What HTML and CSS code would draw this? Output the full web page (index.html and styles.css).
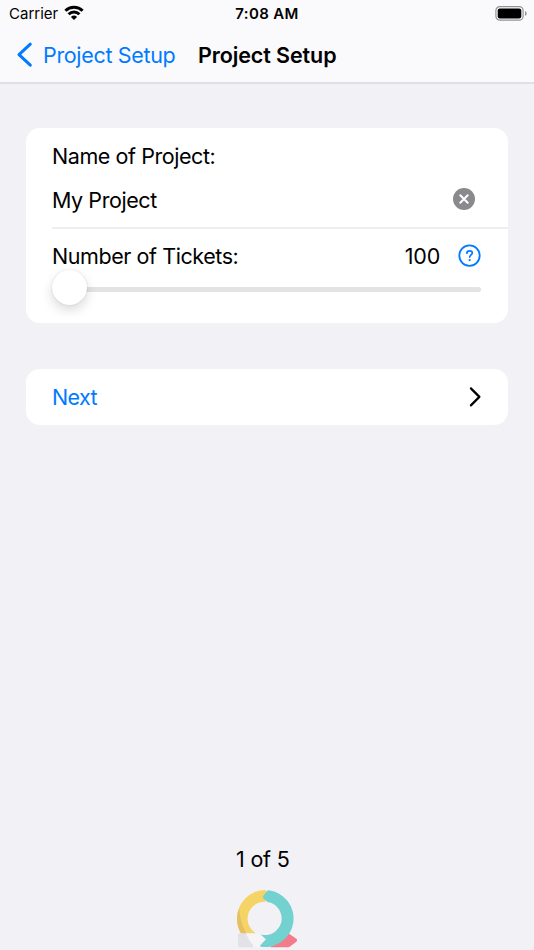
FILE: index.html
```html
<!DOCTYPE html>
<html lang="en">
<head>
<meta charset="utf-8">
<title>Project Setup</title>
<link rel="stylesheet" href="styles.css">
</head>
<body>
<header class="top">
  <div class="status">
    <div class="carrier"><span class="carrier-name">Carrier</span>
      <svg class="wifi" width="20" height="16" viewBox="0 0 20 16"><g fill="none" stroke="#000" stroke-width="3"><path d="M1.400 5.800a12.300 12.300 0 0 1 17.200 0"/><path d="M4.600 9.300a7.700 7.700 0 0 1 10.800 0"/></g><path d="M6.900 11.900a4.500 4.500 0 0 1 6.200 0L10 15z"/></svg>
    </div>
    <div class="time">7:08 AM</div>
    <svg class="battery" width="32" height="16" viewBox="0 0 32 16"><rect x=".9" y=".6" width="27.2" height="13.600" rx="4" fill="none" stroke="#929294" stroke-width="1.200"/><rect x="2.700" y="2.400" width="23.600" height="10" rx="2.200"/><path d="M30 5c2.200.8 2.200 4 0 4.800z" fill="#929294"/></svg>
  </div>
  <nav class="nav">
    <a class="back"><svg width="18" height="28" viewBox="0 0 18 28"><path d="M15.300 3.200 4 13.700l11.300 10.500" fill="none" stroke="#007aff" stroke-width="3" stroke-linecap="round" stroke-linejoin="round"/></svg><span class="back-label">Project Setup</span></a>
    <h1 class="title">Project Setup</h1>
  </nav>
</header>
<main class="content">
  <section class="card">
    <div class="name-cell">
      <label class="row label-name"><span class="tight">Name of Project:</span></label>
      <div class="row field"><span class="tight">My Project</span>
        <svg class="clear" width="22" height="22" viewBox="0 0 22 22"><circle cx="11" cy="11" r="11" fill="#8a8a8e"/><path d="m7.300 7.300 7.400 7.400m0-7.400-7.400 7.400" stroke="#fff" stroke-width="2" stroke-linecap="round"/></svg>
      </div>
    </div>
    <div class="ticket-cell">
      <div class="row tickets"><span class="tight">Number of Tickets:</span><span class="count">100</span>
        <svg class="help" width="23" height="23" viewBox="0 0 23 23"><circle cx="11.500" cy="11.600" r="10.200" fill="none" stroke="#007aff" stroke-width="1.800"/><path d="M8.900 9.200C8.900 7.600 10 6.800 11.600 6.800c1.600 0 2.700.9 2.700 2.200 0 1.900-2.600 2-2.600 4.100" fill="none" stroke="#007aff" stroke-width="1.700" stroke-linecap="round"/><circle cx="11.600" cy="16.100" r="1.150" fill="#007aff"/></svg>
      </div>
      <div class="slider"><div class="knob"></div></div>
    </div>
  </section>
  <a class="card next"><span class="t-next">Next</span><svg width="14" height="22" viewBox="0 0 14 22"><path d="m2.900 2.400 8.500 8.500-8.500 8.500" fill="none" stroke="#000" stroke-width="2.200" stroke-linecap="round" stroke-linejoin="round"/></svg></a>
</main>
<footer class="footer">
  <div class="page">1 of 5</div>
  <svg class="logo" width="70" height="65" viewBox="0 0 70 65">
    <path d="M38 62.200 56 48l8 5.600q2.300 1.700 0 3.400l-6 4.600q-1 .6-2 .6z" fill="#f47b8a"/>
    <path d="M34 5A28.500 28.500 0 0 0 5 33.500C5 43 9 50 14 54.500L25 49a17 17 0 0 1 8.500-32.200z" fill="#f6d365"/>
    <path d="M7.200 23A28.500 28.500 0 0 0 14 54.500l3.500-1.500C12 46 8 36 7.200 23z" fill="#e3c062"/>
    <path d="M7.500 48.300H21v13.900H8q-2 0-2-2V50q0-1.700 1.500-1.700z" fill="#e3e2e7"/>
    <path d="M14 48.300h12.500l7 5.300-5.400 8.200-3.600.4C20 60 16.500 55 14 48.300z" fill="#f5f5f7"/>
    <path d="M37 5.200A28.500 28.500 0 1 1 29 61.800q-1.400-.4-.6-1.600l5.600-6-5.500-4.700A16.700 16.700 0 1 0 35.500 16.900L31.700 13.800q-1.500-1.400-.2-3.400l3.200-4.200q.9-1.100 2.300-1z" fill="#73d1d0"/>
  </svg>
</footer>
</body>
</html>
```
FILE: styles.css
```css
* { box-sizing: border-box; }
body { margin: 0; height: 950px; overflow: hidden; display: flex; flex-direction: column; background: #f2f1f6; color: #000; font: 400 21.5px/28px Inter, "Liberation Sans", sans-serif; }
svg { display: block; flex: none; }
span, .time, .title, .page { white-space: nowrap; }
.top { height: 84px; background: #fafafc; border-bottom: 2px solid #e0e0e3; }
.status { height: 28px; display: grid; grid-template-columns: 1fr auto 1fr; padding: 0 7px 0 9px; align-items: start; }
.carrier { display: flex; gap: 6px; font-size: 15px; line-height: 28px; }
.wifi { margin-top: 5px; }
.time { font-size: 15px; font-weight: 600; letter-spacing: .35px; margin-right: 2px; }
.battery { justify-self: end; margin-top: 6px; }
.nav { display: flex; align-items: center; height: 53px; padding-left: 15px; }
.back { display: flex; align-items: center; color: #007aff; gap: 10px; width: 183px; letter-spacing: -.33px; }
.title { margin: 0; font-size: 21.5px; font-weight: 600; letter-spacing: -.1px; }
.content { padding: 44px 26px 0; flex: 1; }
.card { display: block; background: #fff; border-radius: 14px; }
.tight { letter-spacing: -.43px; }
.name-cell { margin-left: 26px; height: 101px; padding-top: 5px; border-bottom: 2px solid #eeeef0; }
.row { display: flex; align-items: center; height: 44px; }
.row .tight { padding-top: 1px; }
.field { padding-right: 33px; justify-content: space-between; }
.ticket-cell { padding: 5px 27px 0 26px; height: 94px; }
.tickets { height: 43px; }
.tickets .tight { padding-top: 0; }
.count { margin-left: auto; margin-right: 18px; letter-spacing: -.2px; }
.slider { position: relative; height: 5px; border-radius: 3px; background: #e3e3e5; margin-top: 10px; }
.knob { position: absolute; left: 0; top: -17px; width: 35px; height: 35px; border-radius: 50%; background: #fff; box-shadow: 0 5px 12px rgba(0,0,0,.15), 0 0 2px rgba(0,0,0,.12); }
.next { margin-top: 46px; height: 56px; display: flex; align-items: center; justify-content: space-between; padding: 0 26px; color: #007aff; }
.t-next { letter-spacing: -.6px; }
.footer { height: 105px; width: 70px; margin-left: 232px; }
.page { margin-left: 4px; height: 40px; letter-spacing: -.2px; }
```
